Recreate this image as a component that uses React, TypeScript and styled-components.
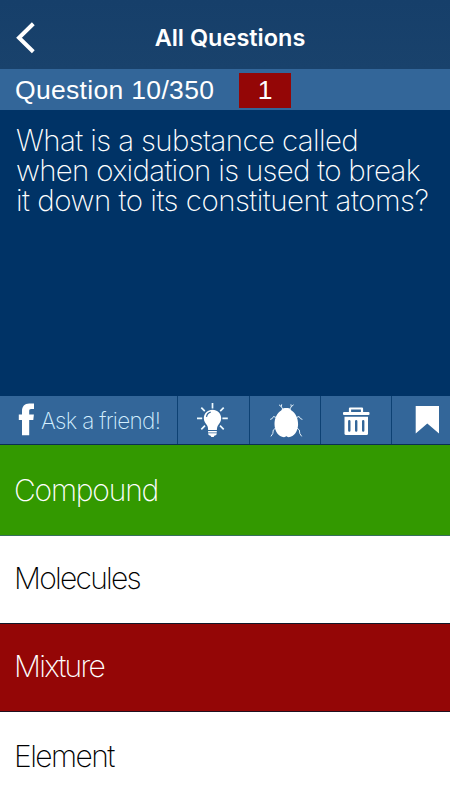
import React from "react";
import styled, { createGlobalStyle } from "styled-components";

const GlobalStyle = createGlobalStyle`
  * { box-sizing: border-box; }
  body { margin: 0; background: #fff; }
`;

const Screen = styled.main`
  width: 450px;
  height: 800px;
  display: flex;
  flex-direction: column;
  overflow: hidden;
  font-family: Inter, "Liberation Sans", sans-serif;
  color: #fff;
  background: #fff;
`;

const Header = styled.header`
  height: 69px;
  flex: none;
  display: grid;
  grid-template-columns: 60px 1fr 50px;
  align-items: center;
  background: linear-gradient(#163f6a, #19426c);
`;

const BackButton = styled.button`
  width: 60px;
  height: 69px;
  padding: 6px 0 0 15px;
  border: 0;
  background: none;
  display: flex;
  align-items: center;
  svg { display: block; }
`;

const Title = styled.h1`
  margin: 7px 0 0;
  text-align: center;
  font-size: 23.5px;
  line-height: 30px;
  font-weight: 600;
  letter-spacing: 0;
  white-space: nowrap;
`;

const StatusBar = styled.div`
  height: 41px;
  flex: none;
  display: flex;
  align-items: center;
  padding: 1px 0 0 15px;
  background: #336699;
  font-family: "Liberation Sans", Arial, sans-serif;
  font-size: 26.5px;
  line-height: 35px;
`;

const Progress = styled.div`
  width: 224px;
  white-space: nowrap;
  letter-spacing: 0.32px;
`;

const Score = styled.div`
  width: 52px;
  height: 35px;
  text-align: center;
  background: #940606;
`;

const Prompt = styled.section`
  height: 286px;
  flex: none;
  padding: 15px 0 0 16px;
  background: #003366;
  font-size: 29.5px;
  line-height: 30px;
  font-weight: 200;
`;

const Line = styled.div<{ $spacing: number }>`
  white-space: nowrap;
  letter-spacing: ${(p) => p.$spacing}px;
`;

const Toolbar = styled.nav`
  height: 49px;
  flex: none;
  display: grid;
  grid-template-columns: 178px 72px 71px 71px 58px;
  border-bottom: 1px solid #0a3052;
  background: #336699;
`;

const Tool = styled.button<{ $last?: boolean }>`
  display: flex;
  align-items: center;
  padding: 0;
  border: 0;
  border-right: ${(p) => (p.$last ? "0" : "1px solid #0d4173")};
  background: none;
  color: #fff;
  font: inherit;
  svg { display: block; flex: none; }
`;

const AskLabel = styled.span`
  padding: 2px 0 0 1px;
  font-size: 22.5px;
  line-height: 30px;
  font-weight: 200;
  letter-spacing: -0.68px;
  color: #d4efff;
  white-space: nowrap;
`;

const Answers = styled.div`
  flex: 1;
  display: grid;
  grid-template-rows: 91px 88px 88px 88px;
`;

type Tone = "right" | "wrong" | "plain";

const Answer = styled.button<{ $tone: Tone; $edge: string; $spacing: number; $lift?: number }>`
  padding: 0 0 ${(p) => p.$lift ?? 0}px 14px;
  border: 0;
  border-bottom: 1px solid ${(p) => p.$edge};
  background: ${(p) => ({ right: "#339900", wrong: "#940606", plain: "#fff" })[p.$tone]};
  color: ${(p) => (p.$tone === "plain" ? "#000" : "#fff")};
  text-align: left;
  font-family: inherit;
  font-size: 30px;
  line-height: 36px;
  font-weight: 200;
  letter-spacing: ${(p) => p.$spacing}px;
`;

const BackIcon = () => (
  <svg width="22" height="32" viewBox="0 0 22 32" fill="none" stroke="#fff" strokeWidth="4">
    <path d="M18.300 1.800 4 15.800l14.300 14" />
  </svg>
);

const FacebookIcon = () => (
  <svg width="40" height="48" viewBox="0 0 40 48" fill="#fff">
    <path d="M22 39.200V24h-3.200v-5.400H22v-3.400c0-5 2.500-7.800 7.300-7.800H34v5.700h-2.800c-1.600 0-2 .7-2 2.200v3.300h4.700l-.6 5.400h-4.100v15.200z" />
  </svg>
);

const BulbIcon = () => (
  <svg width="71" height="48" viewBox="178 396 71 48" fill="none" stroke="#eefaff" strokeWidth="1.700">
    <path d="M212.500 403v5.400M197 418.300h5.200M222.400 418.300h5.400M201.300 407.700l3.500 3.500M223.700 407.700l-3.500 3.500M201.300 429.300l3.700-3.600M223.700 429.300l-3.700-3.600" />
    <path fill="#fff" stroke="none" d="M212.500 409.700c-5 0-8.700 3.800-8.700 8.600 0 3 1.600 4.800 3 6.700 1 1.400 1.300 2.700 1.300 4.900h8.800c0-2.200.4-3.500 1.400-4.900 1.400-1.900 2.900-3.700 2.900-6.700 0-4.800-3.700-8.600-8.700-8.600z" />
    <path strokeWidth="1.200" stroke="#336699" d="M206.500 416.800c.4-2.600 1.900-4 4.200-4.600" />
    <path fill="#fff" stroke="none" d="M208.100 430.900h8.700v1.700h-8.700zM208.100 433.300h8.700l-.5 1.700-2 .7-.6 1.200h-2.400l-.7-1.200-2-.7z" />
  </svg>
);

const BugIcon = () => (
  <svg width="71" height="48" viewBox="250 396 71 48" fill="none" stroke="#e2f0fa" strokeWidth="1">
    <path fill="#fff" stroke="none" d="M281.200 410.400c.6-1.400 2-2.100 3.500-2.400h3.200c1.500.3 2.900 1 3.500 2.400 4.100 2.300 6.700 7.600 6.700 13.600 0 7.200-4 12.900-9.500 13.200-1.100 0-1.700-.4-2.300-1.100-.6.7-1.200 1.100-2.300 1.100-5.500-.3-9.500-6-9.500-13.200 0-6 2.600-11.300 6.700-13.600z" />
    <path d="M282.800 409.200l-1.600-2.700-2.200-1.700M281.300 406.800l.4-2.500M289.800 409.200l1.600-2.700 2.200-1.700M291.300 406.800l-.4-2.500" />
    <path d="M276.300 417.500l-2.800-1-1.300 2.100-2 .8M296.300 417.500l2.800-1 1.300 2.100 2 .8M275.600 428l-2.300 2-.5 3.500-1.900 2.900M297 428l2.300 2 .5 3.500 1.900 2.900" />
  </svg>
);

const TrashIcon = () => (
  <svg width="70" height="48" viewBox="321 396 70 48">
    <path fill="none" stroke="#fff" strokeWidth="2.200" strokeLinejoin="round" d="M350 412v-3.500h12v3.500" />
    <rect x="343" y="412" width="26.500" height="3" rx="1" fill="#fff" />
    <path fill="#fff" d="M344.500 416.800h23.500v16.700q0 1.500-1.500 1.500H346q-1.500 0-1.500-1.500z" />
    <path stroke="#336699" strokeWidth="2.400" strokeLinecap="round" d="M349.300 421.300v9.300M356.200 421.300v9.300M363.200 421.300v9.300" />
  </svg>
);

const BookmarkIcon = () => (
  <svg width="58" height="48" viewBox="392 396 58 48">
    <path fill="#fff" d="M415.700 406h23.300v27.400l-11.700-10-11.600 10z" />
  </svg>
);

const question = [
  { text: "What is a substance called", spacing: -0.63 },
  { text: "when oxidation is used to break", spacing: -0.72 },
  { text: "it down to its constituent atoms?", spacing: -0.51 },
];

export default function App() {
  return (
    <Screen>
      <GlobalStyle />
      <Header>
        <BackButton aria-label="Back"><BackIcon /></BackButton>
        <Title>All Questions</Title>
      </Header>
      <StatusBar>
        <Progress>Question 10/350</Progress>
        <Score>1</Score>
      </StatusBar>
      <Prompt>
        {question.map((l) => (
          <Line key={l.text} $spacing={l.spacing}>{l.text}</Line>
        ))}
      </Prompt>
      <Toolbar>
        <Tool><FacebookIcon /><AskLabel>Ask a friend!</AskLabel></Tool>
        <Tool aria-label="Hint"><BulbIcon /></Tool>
        <Tool aria-label="Report a bug"><BugIcon /></Tool>
        <Tool aria-label="Delete"><TrashIcon /></Tool>
        <Tool aria-label="Bookmark" $last><BookmarkIcon /></Tool>
      </Toolbar>
      <Answers>
        <Answer $tone="right" $edge="#36705a" $spacing={-1.2}>Compound</Answer>
        <Answer $tone="plain" $edge="#101828" $spacing={-1.75} $lift={4}>Molecules</Answer>
        <Answer $tone="wrong" $edge="#201020" $spacing={-1.75} $lift={4}>Mixture</Answer>
        <Answer $tone="plain" $edge="#fff" $spacing={-1.55}>Element</Answer>
      </Answers>
    </Screen>
  );
}
